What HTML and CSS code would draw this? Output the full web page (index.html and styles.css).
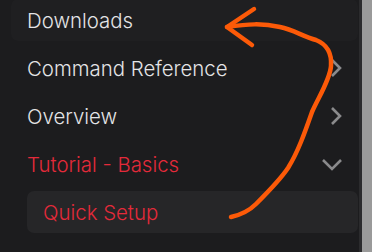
FILE: index.html
```html
<!DOCTYPE html>
<html lang="en">
<head>
  <meta charset="UTF-8">
  <title>Docs sidebar</title>
  <link rel="stylesheet" href="styles.css">
</head>
<body>
<div class="frame">
  <ul class="nav">
    <li class="item hover">Downloads</li>
    <li class="item">Command Reference
      <svg class="chev" width="14" height="18" viewBox="0 0 14 18"><path d="M3 1 L11 9 L3 17"/></svg>
    </li>
    <li class="item">Overview
      <svg class="chev" width="14" height="18" viewBox="0 0 14 18"><path d="M3 1 L11 9 L3 17"/></svg>
    </li>
    <li class="item active">Tutorial - Basics
      <svg class="chev" width="22" height="14" viewBox="0 0 22 14"><path d="M2 3 L11 12 L20 3"/></svg>
    </li>
    <li class="item sub current">Quick Setup</li>
    <li class="item sub">Interrupts and Timers</li>
  </ul>
  <div class="scrollbar"><div class="thumb"></div></div>

  <!-- hand drawn annotation -->
  <svg class="scribble" width="372" height="252" viewBox="0 0 372 252">
    <path d="M231 217 C240 215 248 212 256 204 C268 192 280 180 288 168 C298 152 305 132 312 112 C318 98 330 80 331 66 C332 52 326 44 316 40 C302 36 294 30 280 27 C262 23 248 24 227 27"/>
    <path d="M254 9 L227 27 L252 45"/>
  </svg>
</div>
</body>
</html>
```

FILE: styles.css
```css
* {
  margin: 0;
  padding: 0;
}

ul {
  list-style: none;
}

body {
  background-color: #1c1c1e;
  font-family: Inter, "Noto Sans", sans-serif;
  overflow: hidden;
}

.frame {
  width: 372px;
  height: 252px;
  display: flex;
  position: relative;
  overflow: hidden;
}

.nav {
  flex: 1;
  display: flex;
  flex-direction: column;
  gap: 6px;
  margin-top: -1px;
  padding: 0 1px 0 11px;
}

.item {
  flex: none;
  height: 42px;
  display: flex;
  align-items: center;
  justify-content: space-between;
  padding: 0 15px 0 16px;
  border-radius: 7px;
  font-size: 20.4px;
  font-weight: 300;
  color: #e4e4e6;
  white-space: nowrap;
}

.item.hover {
  background-color: #1f1f21;
}

.item.active {
  color: #e42a3a;
}

.item.sub {
  margin-left: 16px;
}

.item.current {
  background-color: #262628;
  color: #e42a3a;
}

.chev {
  fill: none;
  stroke: #8a8a8c;
  stroke-width: 2.6;
}

.scrollbar {
  width: 10px;
  background-color: #2b2b2d;
  padding-left: 3px;
}

.thumb {
  height: 100%;
  background-color: #9a9a9a;
}

.scribble {
  position: absolute;
  left: 0;
  top: 0;
  fill: none;
  stroke: #fc5a08;
  stroke-width: 4.5;
  stroke-linecap: round;
  stroke-linejoin: round;
}
```
